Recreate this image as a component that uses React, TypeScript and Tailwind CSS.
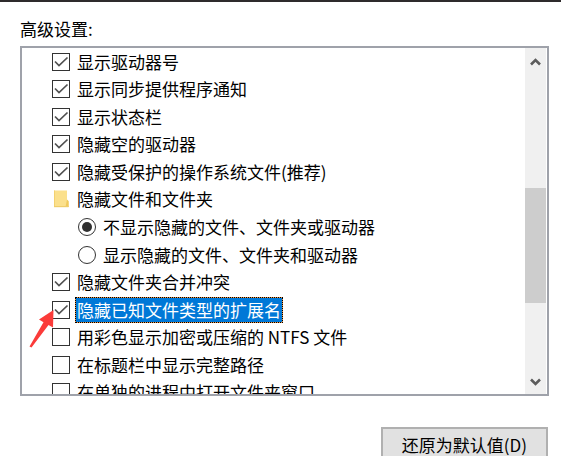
import React, { useState } from 'react';

interface Option {
  id: string;
  label: string;
  kind: 'check' | 'folder' | 'radio';
  checked?: boolean;
}

const options: Option[] = [
  { id: 'drive-letters', label: '显示驱动器号', kind: 'check', checked: true },
  { id: 'sync-notify', label: '显示同步提供程序通知', kind: 'check', checked: true },
  { id: 'status-bar', label: '显示状态栏', kind: 'check', checked: true },
  { id: 'empty-drives', label: '隐藏空的驱动器', kind: 'check', checked: true },
  { id: 'protected-files', label: '隐藏受保护的操作系统文件(推荐)', kind: 'check', checked: true },
  { id: 'hidden-files', label: '隐藏文件和文件夹', kind: 'folder' },
  { id: 'hidden-off', label: '不显示隐藏的文件、文件夹或驱动器', kind: 'radio' },
  { id: 'hidden-on', label: '显示隐藏的文件、文件夹和驱动器', kind: 'radio' },
  { id: 'merge-conflict', label: '隐藏文件夹合并冲突', kind: 'check', checked: true },
  { id: 'extensions', label: '隐藏已知文件类型的扩展名', kind: 'check', checked: true },
  { id: 'ntfs-color', label: '用彩色显示加密或压缩的 NTFS 文件', kind: 'check' },
  { id: 'full-path', label: '在标题栏中显示完整路径', kind: 'check' },
  { id: 'own-process', label: '在单独的进程中打开文件夹窗口', kind: 'check' },
];

const selectedId = 'extensions';

function FolderIcon() {
  return (
    <svg width="18" height="18" viewBox="0 0 18 18" aria-hidden="true">
      <path d="M2 0.5h13v9.5l1.5 1.5v5.5H2z" fill="#fbe08c" />
      <path d="M2 0.5h1v16.5H2z" fill="#f3d170" />
      <path d="M15 9.5l1.6 1.5v6h-3.1z" fill="#f0c95c" />
      <path d="M2 16h14.5v1.2H2z" fill="#efcd6a" />
    </svg>
  );
}

function Arrow() {
  return (
    <svg
      className="absolute left-1.5 top-3 pointer-events-none"
      width="26"
      height="42"
      viewBox="0 0 26 42"
      aria-hidden="true"
    >
      <path d="M25.5 2L11 11.5l4.5 2.7L1.5 38.4l2 1L20.5 17l4.5 2.6z" fill="#fb3b39" />
    </svg>
  );
}

function Chevron({ down }: { down?: boolean }) {
  return (
    <svg width="12" height="10" viewBox="0 0 12 10" aria-hidden="true">
      <path
        d={down ? 'M1 2.5L5.5 7 10 2.5' : 'M1 7.5L5.5 3 10 7.5'}
        fill="none"
        stroke="#5c5c5c"
        strokeWidth="2.6"
      />
    </svg>
  );
}

export default function App() {
  const [checks, setChecks] = useState<Record<string, boolean>>(
    Object.fromEntries(options.map((o) => [o.id, !!o.checked]))
  );
  const [radio, setRadio] = useState('hidden-off');

  return (
    <div className="h-screen overflow-hidden border-t-2 border-[#2e2b2c] bg-white pl-5 pr-3 pt-[15px] font-['Noto_Sans_CJK_SC','Noto_Sans',sans-serif] text-[17px] leading-6 text-black">
      <h1 id="advanced">高级设置:</h1>

      <div className="mt-[5px] flex h-[350px] overflow-hidden border-2 border-[#9fa2aa]">
        <ul aria-labelledby="advanced" className="grid h-[358px] flex-1 auto-rows-fr">
          {options.map((option) => (
            <li
              key={option.id}
              className={`relative flex items-center gap-[5px] ${option.kind === 'radio' ? 'pl-14' : 'pl-[30px]'}`}
            >
              {option.kind === 'folder' && <FolderIcon />}
              {option.kind === 'check' && (
                <span className="grid size-[18px]">
                  <input
                    id={option.id}
                    type="checkbox"
                    className="peer col-start-1 row-start-1 size-[18px] appearance-none border border-[#333] bg-white"
                    checked={checks[option.id]}
                    onChange={(e) => setChecks({ ...checks, [option.id]: e.target.checked })}
                  />
                  <svg
                    className="pointer-events-none invisible col-start-1 row-start-1 peer-checked:visible"
                    width="18"
                    height="18"
                    viewBox="0 0 18 18"
                    aria-hidden="true"
                  >
                    <path d="M3 8.5l4 4 8.5-8" fill="none" stroke="#505050" strokeWidth="1.7" />
                  </svg>
                </span>
              )}
              {option.kind === 'radio' && (
                <span className="grid size-[18px] place-items-center">
                  <input
                    id={option.id}
                    type="radio"
                    name="hidden-files"
                    className="peer col-start-1 row-start-1 size-[18px] appearance-none rounded-full border border-[#333] bg-white"
                    checked={radio === option.id}
                    onChange={() => setRadio(option.id)}
                  />
                  <span className="pointer-events-none invisible col-start-1 row-start-1 size-[10px] rounded-full bg-[#303030] peer-checked:visible" />
                </span>
              )}

              {option.id === selectedId ? (
                <span className="bg-[#f0953f]">
                  <label
                    htmlFor={option.id}
                    className="block border border-dotted border-black bg-[#0078d7] bg-clip-padding px-px text-white"
                  >
                    {option.label}
                  </label>
                </span>
              ) : (
                <label htmlFor={option.kind === 'folder' ? undefined : option.id} className="px-0.5">
                  {option.label}
                </label>
              )}
              {option.id === selectedId && <Arrow />}
            </li>
          ))}
        </ul>

        {/* scroll bar */}
        <div className="mr-px flex w-[21px] flex-col items-center bg-[#f0f0f0]">
          <button type="button" aria-label="向上" className="flex h-7 items-center">
            <Chevron />
          </button>
          <div className="flex w-full flex-1 flex-col">
            <div className="mt-28 h-[115px] bg-[#cdcdcd]" />
          </div>
          <button type="button" aria-label="向下" className="flex h-6 items-center">
            <Chevron down />
          </button>
        </div>
      </div>

      <div className="mt-[31px] flex justify-end pr-px">
        <button
          type="button"
          className="h-9 border-2 border-[#b0b0b0] bg-[#e1e1e1] px-[19px]"
        >
          还原为默认值(D)
        </button>
      </div>
    </div>
  );
}
